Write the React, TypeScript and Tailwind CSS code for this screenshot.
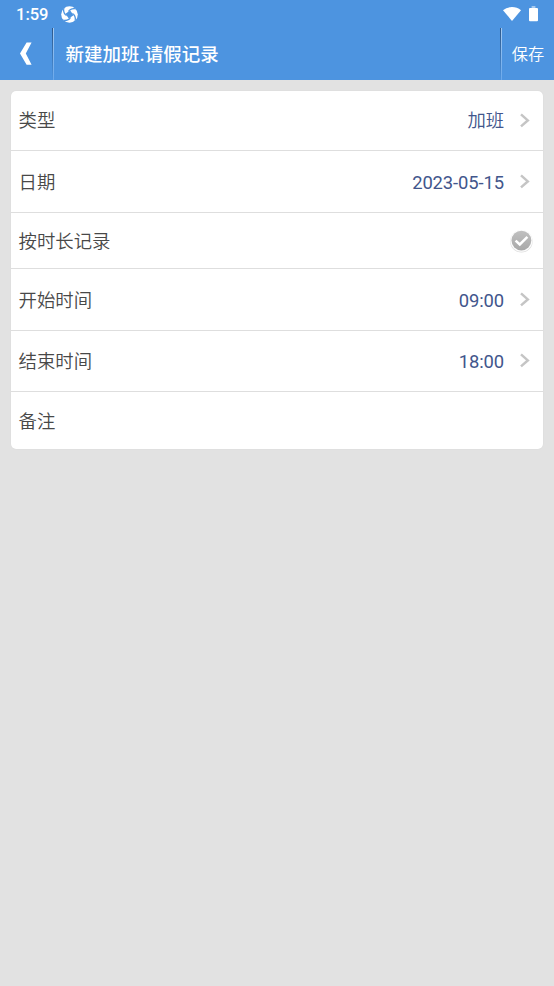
import React from 'react';

const fontStack = "font-['Roboto','Noto_Sans_CJK_SC',sans-serif]";

function Chevron() {
  return (
    <svg className="relative -top-px ml-4 block h-4 w-[10px] shrink-0" viewBox="0 0 10 16" fill="none">
      <path d="M1 2.4L7.8 8.4L1 14.4" stroke="#c5c5c5" strokeWidth="2.5" />
    </svg>
  );
}

function CheckCircle() {
  return (
    <svg className="block h-6 w-6" viewBox="0 0 24 24" fill="none">
      <defs>
        <linearGradient id="disc" x1="0" y1="0" x2="0" y2="1">
          <stop offset="0" stopColor="#c0c0c0" />
          <stop offset="1" stopColor="#a8a8a8" />
        </linearGradient>
      </defs>
      <circle cx="12.4" cy="12.4" r="11.2" fill="#dedede" />
      <circle cx="12.4" cy="11.8" r="11" fill="#fcfcfc" />
      <circle cx="12.4" cy="11.6" r="9.9" fill="url(#disc)" />
      <path d="M6.6 11.6L10.8 15.5L18.4 7.9" stroke="#fff" strokeWidth="2.5" />
    </svg>
  );
}

function BrandIcon() {
  return (
    <svg className="ml-[13px] block h-[17px] w-[17px]" viewBox="0 0 17 17">
      <circle cx="8.5" cy="8.5" r="8.3" fill="#fff" />
      <g fill="#4d94e0" transform="rotate(-35 8.5 8.5)">
        <rect x="5.6" y="5.6" width="5.8" height="5.8" />
        <path id="vane" d="M5.6 8.5V5.6C5.6 3.6 6.4 1.8 8.4 0L6.6 0.2C4.8 1.8 4.1 3.8 4.4 6.6Z" />
        <use href="#vane" transform="rotate(90 8.5 8.5)" />
        <use href="#vane" transform="rotate(180 8.5 8.5)" />
        <use href="#vane" transform="rotate(270 8.5 8.5)" />
      </g>
    </svg>
  );
}

function Divider() {
  return (
    <div className="flex h-[52px] w-[2px] shrink-0">
      <div className="w-px bg-linear-to-b from-[#2d588a] to-[#4d94e0]" />
      <div className="w-px bg-linear-to-b from-[#a4caf2] to-[#6ba8ea]" />
    </div>
  );
}

type RowProps = {
  label: string;
  value?: string;
  height: string;
  textTop?: string;
  valueWeight?: string;
  last?: boolean;
  children?: React.ReactNode;
};

function Row({
  label,
  value,
  height,
  textTop = 'pt-[2px]',
  valueWeight = 'font-normal',
  last,
  children,
}: RowProps) {
  return (
    <div
      className={`flex items-center justify-between pl-[7.5px] pr-[13px] ${height} ${
        last ? '' : 'border-b border-[#dedede]'
      }`}
    >
      <span className={`${textTop} text-[18.4px] font-[350] leading-6 text-[#484848]`}>{label}</span>
      {value && (
        <span className="flex items-center">
          <span
            className={`${textTop} ${valueWeight} text-[18.4px] leading-6 tracking-[-0.1px] text-[#42568c]`}
          >
            {value}
          </span>
          <Chevron />
        </span>
      )}
      {children}
    </div>
  );
}

export default function App() {
  return (
    <div className={`min-h-screen w-full bg-[#e2e2e2] ${fontStack}`}>
      <header className="h-20 bg-[#4d94e0] text-white">
        <div className="flex h-7 items-center pl-4 pr-[16px]">
          <span className="pt-[2px] text-[16.5px] font-medium leading-5">1:59</span>
          <BrandIcon />
          <div className="ml-auto flex items-center">
            <svg className="block h-[15px] w-[18px]" viewBox="0 0 18 15">
              <path d="M0 3.2C5 -1 13 -1 18 3.2L9 14Z" fill="#fff" />
            </svg>
            <svg className="ml-2 block h-4 w-[9px]" viewBox="0 0 9 16">
              <path d="M2.6 0H6.4V2H2.6Z" fill="#a6caf0" />
              <rect y="2" width="9" height="13.2" rx="1" fill="#fff" />
            </svg>
          </div>
        </div>
        <div className="flex h-[52px] items-center">
          <div className="flex w-[52px] shrink-0 justify-center">
            <svg className="block h-6 w-3" viewBox="0 0 12 24">
              <path d="M6.6 0.6H11.6L5.8 11.6L11.6 22.8H6.6L0 11.6Z" fill="#fff" />
            </svg>
          </div>
          <Divider />
          <h1 className="ml-[11.5px] pt-px text-[18.5px] font-medium leading-6">新建加班.请假记录</h1>
          <div className="ml-auto flex items-center">
            <Divider />
            <button className="w-[52px] pt-[2px] text-center text-[16.2px] font-[350] leading-6">保存</button>
          </div>
        </div>
      </header>
      <main className="px-[11px] pt-[11px]">
        <div className="overflow-hidden rounded-[5px] bg-white shadow-[0_0_1px_#cccccc]">
          <Row label="类型" value="加班" height="h-[60px]" textTop="pt-px" valueWeight="font-[350]" />
          <Row label="日期" value="2023-05-15" height="h-[62px]" />
          <Row label="按时长记录" height="h-[56px]">
            <span className="-mr-[3px]">
              <CheckCircle />
            </span>
          </Row>
          <Row label="开始时间" value="09:00" height="h-[62px]" />
          <Row label="结束时间" value="18:00" height="h-[61px]" />
          <Row label="备注" height="h-[57px]" textTop="pt-[3px]" last />
        </div>
      </main>
    </div>
  );
}
